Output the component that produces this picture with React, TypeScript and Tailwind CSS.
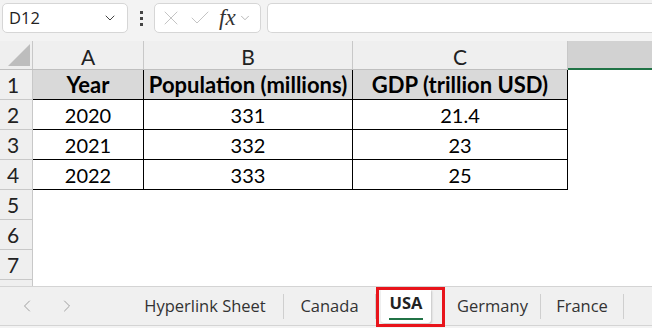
import { ChevronDown, ChevronLeft, ChevronRight, X, Check } from "lucide-react";

const rows = [
  { n: 1, cells: ["Year", "Population (millions)", "GDP (trillion USD)"], head: true },
  { n: 2, cells: ["2020", "331", "21.4"] },
  { n: 3, cells: ["2021", "332", "23"] },
  { n: 4, cells: ["2022", "333", "25"] },
];

const empty = [5, 6, 7];

const tabs = [
  { name: "Hyperlink Sheet", w: "w-[156px]" },
  { name: "Canada", w: "w-[91px]" },
  { name: "USA", w: "w-[69px]" },
  { name: "Germany", w: "w-[95px]" },
  { name: "France", w: "w-[82px]" },
];

function FormulaBar() {
  return (
    <div className="h-[41px] flex items-start pt-[3px] font-['Open_Sans',sans-serif]">
      <div className="ml-[2px] w-[126px] h-[30px] bg-white border border-[#d6d6d6] rounded-[5px] flex items-center justify-between pl-[6px] pr-[9px]">
        <span className="text-[16.5px] text-[#222]">D12</span>
        <ChevronDown size={16} strokeWidth={1.5} className="text-[#444]" />
      </div>
      <div className="w-[26px] h-[30px] flex flex-col items-center justify-center gap-[3px]">
        <span className="w-[3px] h-[3px] bg-[#444]" />
        <span className="w-[3px] h-[3px] bg-[#444]" />
        <span className="w-[3px] h-[3px] bg-[#444]" />
      </div>
      <div className="w-[107px] h-[30px] bg-white border border-[#d6d6d6] rounded-[5px] flex items-center pl-[4px]">
        <X size={24} strokeWidth={0.9} className="text-[#bdbdbd]" />
        <Check size={24} strokeWidth={0.9} className="text-[#bdbdbd] ml-[5px]" />
        <span className="ml-[7px] text-[23px] italic text-[#333] font-['Liberation_Serif',serif] leading-none -mt-[2px]">fx</span>
        <ChevronDown size={14} strokeWidth={1.2} className="text-[#999] ml-[2px]" />
      </div>
      <div className="ml-[6px] flex-1 h-[30px] bg-white border border-[#d6d6d6] rounded-l-[5px] border-r-0" />
    </div>
  );
}

function Grid() {
  const cols = ["A", "B", "C"];
  const widths = ["w-[111px]", "w-[209px]", "w-[215px]"];
  return (
    <div className="bg-white font-['Lato',sans-serif] text-[20px] text-black">
      <div className="flex h-[29px] bg-[#efefef] border-b border-[#bfbfbf]">
        <div className="w-[33px] relative border-r border-[#c8c8c8]">
          <div className="absolute left-[8px] bottom-[3px] w-0 h-0 border-l-[22px] border-l-transparent border-b-[22px] border-b-[#bdbdbd]" />
        </div>
        {cols.map((c, i) => (
          <div key={c} className={`${widths[i]} border-r border-[#c8c8c8] flex items-center justify-center text-[21px] text-[#222] leading-none pt-[2px]`}>
            {c}
          </div>
        ))}
        <div className="flex-1 bg-[#d2d2d2] border-b-[2px] border-[#217346] -mb-[1px]" />
      </div>
      {rows.map((r) => (
        <div key={r.n} className="flex h-[30px]">
          <div className="w-[33px] bg-[#efefef] border-r border-b border-[#c8c8c8] flex items-center pl-[7px] text-[21px] text-[#222]">
            {r.n}
          </div>
          {r.cells.map((c, i) => (
            <div
              key={i}
              className={`${widths[i]} border-r border-b border-black flex items-center justify-center ${r.head ? "bg-[#d9d9d9] font-bold text-[22px]" : ""}`}
            >
              {c}
            </div>
          ))}
          <div className="flex-1" />
        </div>
      ))}
      {empty.map((n) => (
        <div key={n} className="flex h-[30px]">
          <div className="w-[33px] bg-[#efefef] border-r border-b border-[#c8c8c8] flex items-center pl-[7px] text-[21px] text-[#222]">
            {n}
          </div>
          <div className="flex-1" />
        </div>
      ))}
      <div className="flex h-[6px]">
        <div className="w-[33px] bg-[#efefef] border-r border-[#c8c8c8]" />
        <div className="flex-1" />
      </div>
    </div>
  );
}

function TabBar() {
  return (
    <div className="h-[40px] bg-[#f0f0f0] border-t border-b border-[#d4d4d4] flex items-center font-['Open_Sans',sans-serif] text-[16.5px] text-[#333]">
      <ChevronLeft size={20} strokeWidth={1.2} className="text-[#a0a0a0] ml-[17px]" />
      <ChevronRight size={20} strokeWidth={1.2} className="text-[#a0a0a0] ml-[20px]" />
      <div className="ml-[50px] flex items-stretch h-full">
        {tabs.map((t) => {
          const active = t.name === "USA";
          return (
            <div key={t.name} className="flex items-center">
              {active ? (
                <div className={`relative h-full flex items-center pl-[5px] ${t.w}`}>
                  <div className="h-[33px] mt-[1px] bg-white rounded-b-[3px] shadow-[1px_1px_2px_rgba(0,0,0,0.18)] px-[8px] flex flex-col items-center justify-center">
                    <span className="font-bold text-[#222] leading-none mt-[2px]">USA</span>
                    <span className="w-[34px] h-[2px] bg-[#217346] mt-[7px]" />
                  </div>
                  <div className="absolute left-0 right-0 top-[0px] bottom-[-2px] border-[3px] border-[#e8141b]" />
                </div>
              ) : (
                <span className={`${t.w} text-center`}>{t.name}</span>
              )}
              {!active && <span className="w-px h-[25px] bg-[#cfcfcf]" />}
            </div>
          );
        })}
      </div>
    </div>
  );
}

export default function App() {
  return (
    <div className="w-[652px] h-[328px] bg-[#f3f3f3] overflow-hidden">
      <FormulaBar />
      <Grid />
      <TabBar />
    </div>
  );
}
